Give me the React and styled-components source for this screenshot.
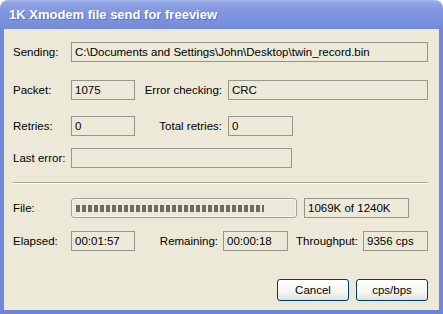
import React from "react";
import styled, { createGlobalStyle } from "styled-components";

const GlobalStyle = createGlobalStyle`
  html, body {
    margin: 0;
    padding: 0;
    background: #ffffff;
  }
  body {
    font-family: "Liberation Sans", Arial, sans-serif;
  }
`;

const Window = styled.div`
  width: 443px;
  height: 314px;
  display: flex;
  flex-direction: column;
  border-radius: 8px 8px 0 0;
  overflow: hidden;
  box-sizing: border-box;
`;

const TitleBar = styled.div`
  height: 29px;
  flex: none;
  display: flex;
  align-items: center;
  padding-left: 9px;
  background: linear-gradient(
    to bottom,
    #a7b8ef 0%,
    #8ea3e6 12%,
    #7f95df 45%,
    #7890dc 80%,
    #7189d8 100%
  );
  color: #ffffff;
  font-family: "Liberation Sans", Arial, sans-serif;
  font-weight: bold;
  font-size: 13px;
  text-shadow: 1px 1px 0 #5d73c4;
`;

const Body = styled.div`
  flex: 1;
  background: #ece9d8;
  border-left: 4px solid #7186d8;
  border-right: 4px solid #7186d8;
  border-bottom: 4px solid #6e83d6;
  padding: 13px 11px 0 9px;
  display: flex;
  flex-direction: column;
  font-size: 11.5px;
  color: #000000;
`;

const Row = styled.div`
  display: flex;
  align-items: center;
  height: 20px;
  margin-top: ${(p) => p.$top || 0}px;
`;

const Label = styled.div`
  width: ${(p) => p.$w}px;
  flex: none;
  text-align: ${(p) => (p.$right ? "right" : "left")};
  padding-right: ${(p) => (p.$right ? p.$pad || 6 : 0)}px;
  box-sizing: border-box;
  white-space: nowrap;
`;

const Field = styled.div`
  width: ${(p) => p.$w}px;
  height: 20px;
  flex: none;
  box-sizing: border-box;
  border: 1px solid #96958c;
  padding-left: 3px;
  display: flex;
  align-items: center;
  white-space: nowrap;
  overflow: hidden;
`;

const Separator = styled.div`
  height: 1px;
  margin-top: 14px;
  background: #aca899;
  border-bottom: 1px solid #ffffff;
`;

const Progress = styled.div`
  width: 226px;
  height: 20px;
  flex: none;
  box-sizing: border-box;
  border: 1px solid #a3a29a;
  border-radius: 3px;
  box-shadow: inset 0 0 0 1px #f4f3ee;
  padding: 0 3px;
  display: flex;
  align-items: center;
`;

const ProgressFill = styled.div`
  height: 7px;
  margin-left: 1px;
  background: repeating-linear-gradient(
    to right,
    #6c6c5e 0,
    #6c6c5e 4px,
    transparent 4px,
    transparent 6px
  );
`;

const Gap = styled.div`
  width: ${(p) => p.$w}px;
  flex: none;
`;

const Buttons = styled.div`
  display: flex;
  justify-content: flex-end;
  gap: 7px;
  margin-top: 28px;
`;

const Button = styled.button`
  width: 72px;
  height: 22px;
  box-sizing: border-box;
  border: 1px solid #003c74;
  border-radius: 3px;
  background: linear-gradient(to bottom, #ffffff 0%, #f5f5f1 60%, #e3e2da 100%);
  font-family: "Liberation Sans", Arial, sans-serif;
  font-size: 11.5px;
  color: #000000;
  padding: 0;
`;

const sent = 1069;
const total = 1240;

export default function App() {
  const fillWidth = Math.round((sent / total) * 218);
  return (
    <>
      <GlobalStyle />
      <Window>
        <TitleBar>1K Xmodem file send for freeview</TitleBar>
        <Body>
          <Row>
            <Label $w={58}>Sending:</Label>
            <Field $w={357}>C:\Documents and Settings\John\Desktop\twin_record.bin</Field>
          </Row>
          <Row $top={18}>
            <Label $w={58}>Packet:</Label>
            <Field $w={64}>1075</Field>
            <Label $w={93} $right>Error checking:</Label>
            <Field $w={200}>CRC</Field>
          </Row>
          <Row $top={16}>
            <Label $w={58}>Retries:</Label>
            <Field $w={64}>0</Field>
            <Label $w={93} $right>Total retries:</Label>
            <Field $w={65}>0</Field>
          </Row>
          <Row $top={12}>
            <Label $w={58}>Last error:</Label>
            <Field $w={221}></Field>
          </Row>
          <Separator />
          <Row $top={14}>
            <Label $w={58}>File:</Label>
            <Progress>
              <ProgressFill style={{ width: fillWidth }} />
            </Progress>
            <Gap $w={7} />
            <Field $w={105}>1069K of 1240K</Field>
          </Row>
          <Row $top={13}>
            <Label $w={58}>Elapsed:</Label>
            <Field $w={64}>00:01:57</Field>
            <Label $w={88} $right $pad={5}>Remaining:</Label>
            <Field $w={65}>00:00:18</Field>
            <Label $w={75} $right $pad={5}>Throughput:</Label>
            <Field $w={65}>9356 cps</Field>
          </Row>
          <Buttons>
            <Button>Cancel</Button>
            <Button>cps/bps</Button>
          </Buttons>
        </Body>
      </Window>
    </>
  );
}
